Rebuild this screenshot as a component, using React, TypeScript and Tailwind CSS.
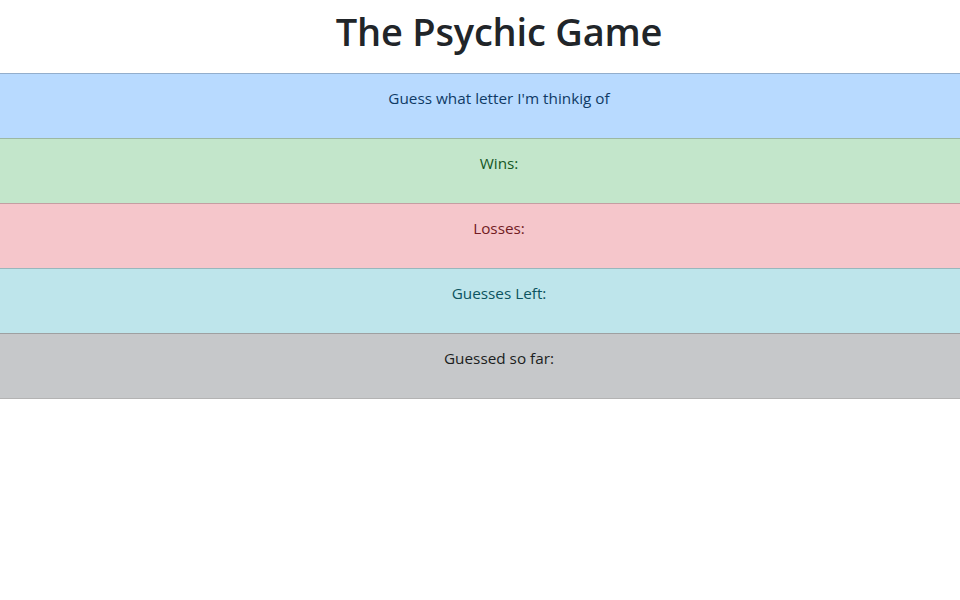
const rows = [
  { label: "Guess what letter I'm thinkig of", bg: "bg-[#b8daff]", text: "text-[#0f3a66]" },
  { label: "Wins:", bg: "bg-[#c3e6cb]", text: "text-[#155724]" },
  { label: "Losses:", bg: "bg-[#f5c6cb]", text: "text-[#721c24]" },
  { label: "Guesses Left:", bg: "bg-[#bee5eb]", text: "text-[#0c5460]" },
  { label: "Guessed so far:", bg: "bg-[#c6c8ca]", text: "text-[#1b1e21]" },
];

export default function App() {
  return (
    <div className="min-h-screen bg-white font-['Open_Sans',_'Noto_Sans',_sans-serif] text-[#212529]">
      <h1 className="flex h-[73px] items-center justify-center pb-[10px] pl-[38px] text-[38px] font-semibold tracking-[-0.2px]">
        The Psychic Game
      </h1>
      <div className="border-b border-[#b3b3b3]">
        {rows.map((row) => (
          <div
            key={row.label}
            className={`h-[65px] border-t border-black/20 pt-3 pl-[38px] text-center text-[15.3px] leading-6 ${row.bg} ${row.text}`}
          >
            {row.label}
          </div>
        ))}
      </div>
    </div>
  );
}
